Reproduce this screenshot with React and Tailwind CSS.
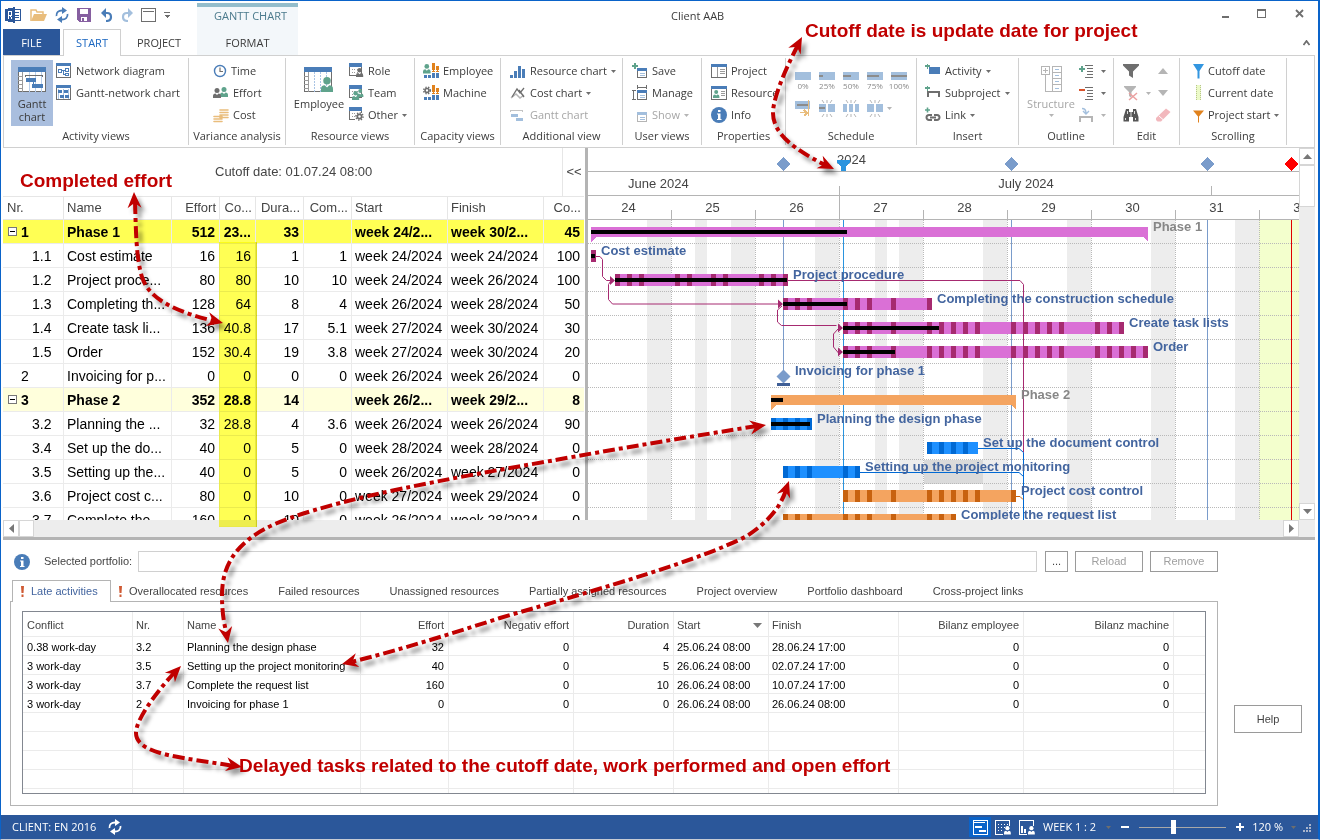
import React from 'react';

const BLUE = '#4a7db8';
const GRAY = '#6e6e6e';
const GREEN = '#5fa38c';
const ORANGE = '#e0821e';
const PALE = '#a3bfdd';

/* ---------- icons ---------- */

const Svg = ({ w = 16, h = 16, crisp = true, children }) => (
    <svg width={w} height={h} viewBox={`0 0 ${w} ${h}`} className="shrink-0" fill="none" shapeRendering={crisp ? 'crispEdges' : 'auto'} aria-hidden="true">
        {children}
    </svg>
);

const Person = ({ x, y, s = 1, c = GRAY }) => (
    <g fill={c} shapeRendering="auto">
        <circle cx={x + 4 * s} cy={y + 2.5 * s} r={2.5 * s} />
        <path d={`M${x} ${y + 10 * s} v${-2 * s} q0 ${-2.5 * s} ${2.5 * s} ${-2.5 * s} l${1.5 * s} ${1.5 * s} l${1.5 * s} ${-1.5 * s} q${2.5 * s} 0 ${2.5 * s} ${2.5 * s} v${2 * s} z`} />
    </g>
);

const Gear = ({ cx, cy, r = 3, c = GRAY }) => (
    <g shapeRendering="auto">
        <circle cx={cx} cy={cy} r={r * 0.7} stroke={c} strokeWidth="1.6" />
        <circle cx={cx} cy={cy} r={r + 0.5} stroke={c} strokeWidth="1.6" strokeDasharray="1.3 1.4" />
    </g>
);

const Frame = ({ w = 15, h = 15 }) => (
    <>
        <rect x="0.5" y="0.5" width={w - 1} height={h - 1} fill="#fff" stroke={GRAY} />
        <rect width={w} height="3" fill={BLUE} />
    </>
);

const DotGrid = ({ w = 12 }) => (
    <>
        <rect x="0.5" y="0.5" width={w} height="12" fill="#fff" stroke={GRAY} />
        <rect width={w + 1} height="4" fill={BLUE} />
        <path d="M3 6v6M5.500 6v6M8 6v6" stroke="#9a9a9a" strokeDasharray="1 2" />
    </>
);

const NetworkIcon = () => (
    <Svg>
        <Frame />
        <path d="M2.500 6.500h3v3h-3zM9.500 5.500h3v3h-3zM9.500 10.500h3v2h-3zM5.500 7.500h4M7.500 7.500v4h2" stroke={BLUE} />
    </Svg>
);

const GanttNetIcon = () => (
    <Svg>
        <Frame />
        <path d="M2.500 4v10M7.500 4v10M12.500 4v10" stroke="#a9c4e4" />
        <path d="M2 5h4v3h-4zM8 5h4v3h-4zM4 10h4v3h-4zM9 10h4v3h-4z" fill={BLUE} />
    </Svg>
);

const GanttBigIcon = () => (
    <Svg w={28} h={26}>
        <rect x="0.5" y="0.5" width="27" height="24" fill="#fff" stroke={GRAY} />
        <path d="M4.500 5v20M0 9.500h4M0 13.500h4M0 17.500h4M0 21.500h4" stroke="#9a9a9a" />
        <path d="M11.500 5v20M17.500 5v20M23.500 5v20" stroke="#b9d0ec" />
        <rect width="28" height="5" fill={BLUE} />
        <path d="M7.500 10V8.500h17V10" stroke={GRAY} />
        <path d="M8 11h10v4H8zM14 17h11v4H14z" fill={BLUE} />
        <path d="M15.500 15v2" stroke={BLUE} />
    </Svg>
);

const EmployeeBigIcon = () => (
    <Svg w={30} h={26}>
        <rect x="0.5" y="0.5" width="27" height="24" fill="#fff" stroke={GRAY} />
        <path d="M4.500 5v20M0 9.500h4M0 13.500h4M0 17.500h4M0 21.500h4" stroke="#9a9a9a" />
        <path d="M10.500 5v20M16.500 5v20M22.500 5v20" stroke="#a9c4e4" strokeDasharray="2 1" />
        <rect width="28" height="5" fill={BLUE} />
        <Person x={17} y={10} s={1.5} c={GREEN} />
    </Svg>
);

const ClockIcon = () => (
    <Svg w={14} h={14} crisp={false}>
        <circle cx="7" cy="7" r="5.500" stroke={BLUE} strokeWidth="1.400" />
        <path d="M7 3.500V7.500h3" stroke={GRAY} strokeWidth="1.200" />
    </Svg>
);

const EffortIcon = () => (
    <Svg>
        <Person x={7} y={2} s={1} c={GREEN} />
        <Person x={0} y={3} s={1} c={GRAY} />
    </Svg>
);

const CostIcon = () => (
    <Svg crisp={false}>
        <path d="M7 3h8M7 5.500h8M7 8h8M7 10.500h8M1 9.500h8M1 12h8M1 14.500h8" stroke="#e9bd7c" strokeWidth="1.600" strokeLinecap="round" />
    </Svg>
);

const RoleIcon = () => <Svg w={15}><DotGrid /><Person x={7} y={5} s={0.9} c={GRAY} /></Svg>;
const TeamIcon = () => <Svg w={15}><DotGrid /><Person x={8} y={4} s={0.8} c={GREEN} /><Person x={3} y={6} s={0.9} c={GREEN} /></Svg>;
const OtherIcon = () => <Svg w={15}><DotGrid /><rect x="6" y="6" width="8" height="8" fill="#fff" /><Gear cx={10.5} cy={9.5} r={3} /></Svg>;

const CapBars = () => (
    <>
        <path d="M9 0h3v9H9zM13 3h3v6h-3z" fill={ORANGE} />
        <path d="M9 7.500h7" stroke="#fff" strokeDasharray="1 1" />
        <path d="M1 12h3v3H1zM5 12h3v3H5zM9 10h3v5H9zM13 10h3v5h-3z" fill={BLUE} />
    </>
);
const CapEmployeeIcon = () => <Svg><CapBars /><Person x={0} y={1} s={0.95} c={GREEN} /></Svg>;
const CapMachineIcon = () => <Svg><CapBars /><Gear cx={4} cy={5.5} r={2.8} /></Svg>;

const ResChartIcon = () => (
    <Svg><path d="M0 12h3v3H0zM4 8h3v7H4zM8 3h3v12H8zM12 6h3v9h-3z" fill={BLUE} /></Svg>
);
const CostChartIcon = () => (
    <Svg crisp={false}>
        <path d="M1 13l5-4 4 4 4-3" stroke="#b5b5b5" strokeWidth="1.500" />
        <path d="M2 12l5-8 3 4 4-5M9 5l5 7" stroke={GRAY} strokeWidth="1.300" />
    </Svg>
);
const GanttSmallIcon = () => (
    <Svg>
        <path d="M0.500 5V3.500h12V5" stroke="#c4c4c4" />
        <path d="M1 7h7v3H1zM6 11h7v3H6z" fill={PALE} />
    </Svg>
);

const MiniWin = ({ pale }) => (
    <>
        <rect x="5.500" y="6.500" width="9" height="8" fill="#fff" stroke={pale ? '#b5b5b5' : GRAY} />
        <rect x="5" y="5" width="10" height="3" fill={pale ? PALE : BLUE} />
        <path d="M8 10.500h5M8 12.500h5" stroke={PALE} />
    </>
);
const SaveViewIcon = () => <Svg><MiniWin /><path d="M0 3h6M3 0v6" stroke={GREEN} strokeWidth="2" /></Svg>;
const ManageIcon = () => (
    <Svg><MiniWin /><path d="M5.500 0v4M14.500 0v4M5 2.500h10M1.500 5v10M0 5.500h4M0 14.500h4" stroke={GRAY} /></Svg>
);
const ShowIcon = () => <Svg><MiniWin pale /></Svg>;

const ProjectIcon = () => (
    <Svg>
        <rect x="0.500" y="1.500" width="15" height="13" fill="#fff" stroke={GRAY} />
        <rect y="1" width="16" height="3" fill={BLUE} />
        <path d="M6.500 4v10M9 6.500h5M9 8.500h5M9 10.500h5" stroke="#9a9a9a" />
    </Svg>
);
const ResourceIcon = () => (
    <Svg>
        <rect x="0.500" y="1.500" width="15" height="13" fill="#fff" stroke={GRAY} />
        <rect y="1" width="16" height="3" fill={BLUE} />
        <Person x={2} y={5} s={0.8} c={GREEN} />
        <path d="M10 6.500h4M10 8.500h4M10 10.500h4" stroke="#9a9a9a" />
    </Svg>
);
const InfoIcon = () => (
    <Svg crisp={false}>
        <circle cx="8" cy="8" r="8" fill={BLUE} />
        <path d="M7 3h2.500v2H7zM6 6.500h3.500v5.500h1v1H6v-1h1V7.500H6z" fill="#fff" />
    </Svg>
);

const Percent = ({ p }) => (
    <Svg w={16} h={9}>
        <rect width="16" height="8" fill={PALE} />
        {p > 0 && <rect y="3" width={(16 * p) / 100} height="2" fill="#8c8c8c" />}
    </Svg>
);
const MoveIcon = () => (
    <Svg w={16} h={17}>
        <rect y="1" width="15" height="8" fill={PALE} />
        <path d="M2 5h11" stroke="#8c8c8c" strokeWidth="2" />
        <path d="M13.500 0v16" stroke="#e9bd7c" />
        <path d="M5 12.500h7M9 10l3 3-3 3" stroke="#e9bd7c" strokeWidth="1.500" />
    </Svg>
);
const Burst = ({ kind }) => (
    <Svg w={16} h={17} crisp={false}>
        <path d="M8 0v3M3 0l2 3M13 0l-2 3M8 14v3M3 17l2-3M13 17l-2-3" stroke="#b5b5b5" />
        <path d={kind === 2 ? 'M0 4h4v8H0zM6 4h4v8H6zM12 4h4v8h-4z' : 'M0 4h7v8H0zM9 4h7v8H9z'} fill={PALE} />
        {kind === 1 && <path d="M0 8h6" stroke="#8c8c8c" strokeWidth="2" />}
    </Svg>
);

const Plus = () => <path d="M0 3h5M2.500 0.500v5" stroke={GREEN} strokeWidth="1.600" />;
const ActivityIcon = () => <Svg><path d="M4 4h11v7H4z" fill={BLUE} /><Plus /></Svg>;
const SubprojectIcon = () => <Svg><path d="M3 12V6.500h11V12" stroke={GRAY} strokeWidth="2" /><Plus /></Svg>;
const LinkIcon = () => (
    <Svg crisp={false}>
        <path d="M7 8H4a2.500 2.500 0 0 0 0 5h3M9 8h3a2.500 2.500 0 0 1 0 5H9M5 10.500h6" stroke={GRAY} strokeWidth="2" />
        <Plus />
    </Svg>
);

const StructureIcon = () => (
    <Svg w={21} h={28}>
        <path d="M0.500 1.500h8v8h-8zM4.500 3v5M2 5.500h5M4.500 10v16.500h6M11.500 1.500h9v25h-9zM11 7.500h9M11 13.500h9M11 19.500h9" stroke="#b5b5b5" />
        <path d="M14 4.500h4M14 10.500h4M14 16.500h4M14 23.500h4" stroke={PALE} />
    </Svg>
);
const OutlineIcon = ({ minus }) => (
    <Svg w={15}>
        <path d="M6 2.500h8M8 5.500h6M8 8.500h6M8 11.500h6M6 14.500h8" stroke={GRAY} />
        {minus ? <path d="M0 5h6" stroke="#d9532c" strokeWidth="2" /> : <path d="M0 6h6M3 3v6" stroke={GREEN} strokeWidth="2" />}
    </Svg>
);
const OutlineSubIcon = () => (
    <Svg w={15}>
        <path d="M1 15V9.500h12V15" stroke="#b5b5b5" strokeWidth="2" />
        <path d="M3 1.500q4 0 4 4.500M4 4l3 3 3-3" stroke={PALE} strokeWidth="1.400" shapeRendering="auto" />
    </Svg>
);

const FilterIcon = () => <Svg crisp={false}><path d="M0 1h16v1.500l-6 6V15l-4-2.500v-4l-6-6z" fill={GRAY} /></Svg>;
const FilterOffIcon = () => (
    <Svg crisp={false}>
        <path d="M1 1h12v1L8.500 7v6L6 11V7L1 2z" fill="#b5b5b5" />
        <path d="M6 8l8 7M14 8l-8 7" stroke="#eba0a0" strokeWidth="1.500" />
    </Svg>
);
const BinocularsIcon = () => (
    <Svg crisp={false}>
        <path d="M3 2h3v3h4V2h3l2.500 8v4.500H10V10H6v4.500H0.500V10z" fill="#555" />
        <path d="M8 4v6M2.500 11v2M12.500 11v2M4.500 4v3M11.500 4v3" stroke="#fff" strokeWidth="0.800" />
    </Svg>
);
const EraserIcon = () => (
    <Svg crisp={false}>
        <path d="M1 11L11 1.500l4.500 3.500L6 14.500H2.500L1 13z" fill="#f2b8bd" />
        <path d="M4 9l4.500 4" stroke="#fff" />
    </Svg>
);
const Tri = ({ up }) => <Svg w={12} h={10} crisp={false}><path d={up ? 'M1 8l5-6 5 6z' : 'M1 2l5 6 5-6z'} fill="#b5b5b5" /></Svg>;

const CutoffIcon = () => <Svg w={11} crisp={false}><path d="M0 1h11L6.500 8v7.500h-2V8z" fill="#3396e0" /></Svg>;
const CurrentIcon = () => (
    <Svg w={11}>
        <rect x="3" width="5" height="15" fill="#ecfac8" />
        <path d="M3.500 0v15M7.500 0v15" stroke="#b7c58c" strokeDasharray="1 1" />
    </Svg>
);
const StartIcon = () => <Svg w={11} crisp={false}><path d="M0 3.500h11L6 9.500V15.500H5V9.500z" fill={ORANGE} /></Svg>;

const SyncIcon = ({ c = BLUE }) => (
    <Svg w={14} h={16} crisp={false}>
        <path d="M1.500 9C1 5.500 3.500 3.500 7 3.500M12.500 7c0.500 3.500-2 5.500-5.500 5.500" stroke={c} strokeWidth="1.800" />
        <path d="M7 0l5 3.500L7 7zM7 9l-5 3.500L7 16z" fill={c} />
    </Svg>
);

const Caret = ({ pale }) => (
    <svg width="5" height="3" viewBox="0 0 5 3" className="shrink-0" aria-hidden="true">
        <path d="M0 0h5L2.500 3z" fill={pale ? '#b5b5b5' : '#6e6e6e'} />
    </svg>
);

/* ---------- ribbon ---------- */

const SmallButton = ({ icon, label, caret, off }) => (
    <button type="button" disabled={off} className={`flex items-center h-[22px] gap-1 whitespace-nowrap ${off ? 'text-[#a6a6a6]' : ''}`}>
        {icon}
        <span>{label}</span>
        {caret && <Caret pale={off} />}
    </button>
);

const Group = ({ label, className, children }) => (
    <>
        <section aria-label={label} className={`shrink-0 pt-1 ${className}`}>
            <div className="flex h-[66px]">{children}</div>
            <div className="h-5 leading-5 text-center whitespace-nowrap">{label}</div>
        </section>
        <div className="w-px my-0.5 shrink-0 bg-[#d0d0d0]" />
    </>
);

const Ribbon = () => (
    <div className="flex ml-0.5 mr-[3px] border border-t-0 border-[#d0d0d0] h-[92px] overflow-hidden">
        <Group label="Activity views" className="w-[184px]">
            <button type="button" className="ml-[7px] mr-[3px] w-[42px] bg-[#a9bede] flex flex-col items-center pt-[7px] leading-[13px]">
                <GanttBigIcon />
                <span className="pt-1">Gantt chart</span>
            </button>
            <div>
                <SmallButton icon={<NetworkIcon />} label="Network diagram" />
                <SmallButton icon={<GanttNetIcon />} label="Gantt-network chart" />
            </div>
        </Group>
        <Group label="Variance analysis" className="w-24">
            <div className="pl-6">
                <SmallButton icon={<ClockIcon />} label="Time" />
                <SmallButton icon={<EffortIcon />} label="Effort" />
                <SmallButton icon={<CostIcon />} label="Cost" />
            </div>
        </Group>
        <Group label="Resource views" className="w-32">
            <button type="button" className="ml-[7px] w-[52px] flex flex-col items-center pt-[7px] leading-[13px]">
                <EmployeeBigIcon />
                <span className="pt-1">Employee</span>
            </button>
            <div className="pl-1">
                <SmallButton icon={<RoleIcon />} label="Role" />
                <SmallButton icon={<TeamIcon />} label="Team" />
                <SmallButton icon={<OtherIcon />} label="Other" caret />
            </div>
        </Group>
        <Group label="Capacity views" className="w-[85px]">
            <div className="pl-2">
                <SmallButton icon={<CapEmployeeIcon />} label="Employee" />
                <SmallButton icon={<CapMachineIcon />} label="Machine" />
            </div>
        </Group>
        <Group label="Additional view" className="w-[121px]">
            <div className="pl-[9px]">
                <SmallButton icon={<ResChartIcon />} label="Resource chart" caret />
                <SmallButton icon={<CostChartIcon />} label="Cost chart" caret />
                <SmallButton icon={<GanttSmallIcon />} label="Gantt chart" off />
            </div>
        </Group>
        <Group label="User views" className="w-[78px]">
            <div className="pl-[9px]">
                <SmallButton icon={<SaveViewIcon />} label="Save" />
                <SmallButton icon={<ManageIcon />} label="Manage" />
                <SmallButton icon={<ShowIcon />} label="Show" caret off />
            </div>
        </Group>
        <Group label="Properties" className="w-[83px]">
            <div className="pl-[9px]">
                <SmallButton icon={<ProjectIcon />} label="Project" />
                <SmallButton icon={<ResourceIcon />} label="Resource" />
                <SmallButton icon={<InfoIcon />} label="Info" />
            </div>
        </Group>
        <Group label="Schedule" className="w-[130px]">
            <div className="pl-[9px] pt-3 flex flex-col gap-2.5">
                <div className="flex gap-2">
                    {[0, 25, 50, 75, 100].map((p) => (
                        <button key={p} type="button" className="w-4 flex flex-col items-center text-[8px] leading-[9px] text-[#8a8a8a]">
                            <Percent p={p} />
                            <span>{p}%</span>
                        </button>
                    ))}
                </div>
                <div className="flex gap-2 items-center">
                    <button type="button" aria-label="Move"><MoveIcon /></button>
                    <button type="button" aria-label="Split"><Burst kind={1} /></button>
                    <button type="button" aria-label="Split all"><Burst kind={2} /></button>
                    <button type="button" aria-label="Merge" className="flex items-center gap-1"><Burst kind={3} /><Caret pale /></button>
                </div>
            </div>
        </Group>
        <Group label="Insert" className="w-[101px]">
            <div className="pl-2">
                <SmallButton icon={<ActivityIcon />} label="Activity" caret />
                <SmallButton icon={<SubprojectIcon />} label="Subproject" caret />
                <SmallButton icon={<LinkIcon />} label="Link" caret />
            </div>
        </Group>
        <Group label="Outline" className="w-[94px]">
            <button type="button" disabled className="ml-1 w-[56px] flex flex-col items-center pt-[5px] leading-[13px] text-[#a6a6a6]">
                <StructureIcon />
                <span className="pt-1 pb-1">Structure</span>
                <Caret pale />
            </button>
            <div>
                {[<OutlineIcon />, <OutlineIcon minus />, <OutlineSubIcon />].map((icon, i) => (
                    <button key={i} type="button" aria-label="Outline level" className="flex items-center gap-[7px] h-[22px]">
                        {icon}<Caret pale={i === 2} />
                    </button>
                ))}
            </div>
        </Group>
        <Group label="Edit" className="w-[65px]">
            <div className="pl-[9px] flex flex-col">
                <button type="button" aria-label="Filter" className="h-[22px] flex items-center"><FilterIcon /></button>
                <button type="button" aria-label="Clear filter" className="h-[22px] flex items-center gap-[7px]"><FilterOffIcon /><Caret pale /></button>
                <button type="button" aria-label="Find" className="h-[22px] flex items-center"><BinocularsIcon /></button>
            </div>
            <div className="pl-1 flex flex-col items-center">
                <button type="button" aria-label="Previous" className="h-[22px] flex items-center"><Tri up /></button>
                <button type="button" aria-label="Next" className="h-[22px] flex items-center"><Tri /></button>
                <button type="button" aria-label="Erase" className="h-[22px] flex items-center"><EraserIcon /></button>
            </div>
        </Group>
        <Group label="Scrolling" className="w-[106px]">
            <div className="pl-[13px] flex flex-col">
                <SmallButton icon={<CutoffIcon />} label="Cutoff date" />
                <SmallButton icon={<CurrentIcon />} label="Current date" />
                <SmallButton icon={<StartIcon />} label="Project start" caret />
            </div>
        </Group>
    </div>
);

/* ---------- title bar and tabs ---------- */

const TitleBar = () => (
    <header className="flex items-stretch h-[55px] pl-0.5 text-[#3b3b3b]">
        <div className="flex flex-col w-[194px]">
            <div className="flex items-center h-[29px] gap-2 pl-0.5">
                <Svg w={17} h={16}>
                    <rect x="7.500" y="2.500" width="8" height="11" fill="#fff" stroke="#2b579a" />
                    <path d="M10 5.500h4M10 8h4M10 10.500h4" stroke="#2b579a" />
                    <path d="M0 2l10-2v16l-10-2z" fill="#2b579a" />
                    <path d="M3.500 11.500v-7h2.500v3.500h-2M5 8l2 3.500" stroke="#fff" />
                </Svg>
                <Svg w={17} h={16} crisp={false}>
                    <path d="M1 14V3h5l1 2h6v2" stroke="#e9bd7c" strokeWidth="1.500" />
                    <path d="M1 14L4 7h13l-3 7z" fill="#e9bd7c" />
                </Svg>
                <SyncIcon />
                <Svg w={14} h={14}>
                    <path d="M0 0h14v14H2L0 12z" fill="#865fa0" />
                    <path d="M3 1h8v5H3zM4 9h6v4H4z" fill="#fff" />
                    <rect x="5" y="10" width="2" height="3" fill="#865fa0" />
                </Svg>
                <span className="pl-0.5">
                    <Svg w={12} h={14} crisp={false}>
                        <path d="M2 5h4q4 0 4 4t-5 4" stroke={BLUE} strokeWidth="2.200" />
                        <path d="M0 5l5-5v10z" fill={BLUE} />
                    </Svg>
                </span>
                <Svg w={12} h={14} crisp={false}>
                    <path d="M10 5H6q-4 0-4 4t5 4" stroke={PALE} strokeWidth="2.200" />
                    <path d="M12 5L7 0v10z" fill={PALE} />
                </Svg>
                <Svg w={15} h={14}>
                    <path d="M0.500 0.500h14v13h-14zM2 3.500h11" stroke={GRAY} />
                </Svg>
                <Svg w={6} h={8}>
                    <path d="M0 1.500h6" stroke={GRAY} />
                    <path d="M0 4h6l-3 3z" fill={GRAY} />
                </Svg>
            </div>
            <nav className="flex flex-1 text-center leading-6">
                <button type="button" className="w-[57px] bg-[#2b579a] text-white">FILE</button>
                <button type="button" className="ml-[3px] w-[58px] h-[27px] border border-b-0 border-[#d0d0d0] text-[#1a66c0]">START</button>
                <button type="button" className="flex-1">PROJECT</button>
            </nav>
        </div>
        <div className="mt-0.5 w-[101px] bg-[#f3f7fa] border-t-4 border-[#93bdcb] text-center flex flex-col">
            <div className="h-[23px] pl-1.5 leading-[18px] text-[#4b7a8c]">GANTT CHART</div>
            <button type="button" className="flex-1 leading-6">FORMAT</button>
        </div>
        <div className="flex-1 pt-[5px] pl-[373px] leading-5">Client AAB</div>
        <div className="flex flex-col items-end justify-between pr-2 pb-2.5">
            <div className="flex gap-7 pt-2 pr-1.5 items-center">
                <button type="button" aria-label="Minimize"><Svg w={7} h={10}><path d="M0 8h7" stroke={GRAY} strokeWidth="2" /></Svg></button>
                <button type="button" aria-label="Maximize"><Svg w={10} h={10}><path d="M0.500 0.500h8v8h-8zM0 1.500h9" stroke={GRAY} /></Svg></button>
                <button type="button" aria-label="Close"><Svg w={9} h={10} crisp={false}><path d="M1 1l7 7M8 1l-7 7" stroke={GRAY} strokeWidth="1.800" /></Svg></button>
            </div>
            <button type="button" aria-label="Collapse ribbon"><Svg w={7} h={6} crisp={false}><path d="M0.500 5l3-4 3 4" stroke={GRAY} strokeWidth="1.800" /></Svg></button>
        </div>
    </header>
);

/* ---------- activity grid ---------- */

const rows = [
    ['1', 'Phase 1', '512', '23...', '33', '', 'week 24/2...', 'week 30/2...', '45'],
    ['1.1', 'Cost estimate', '16', '16', '1', '1', 'week 24/2024', 'week 24/2024', '100'],
    ['1.2', 'Project proce...', '80', '80', '10', '10', 'week 24/2024', 'week 26/2024', '100'],
    ['1.3', 'Completing th...', '128', '64', '8', '4', 'week 26/2024', 'week 28/2024', '50'],
    ['1.4', 'Create task li...', '136', '40.8', '17', '5.1', 'week 27/2024', 'week 30/2024', '30'],
    ['1.5', 'Order', '152', '30.4', '19', '3.8', 'week 27/2024', 'week 30/2024', '20'],
    ['2', 'Invoicing for p...', '0', '0', '0', '0', 'week 26/2024', 'week 26/2024', '0'],
    ['3', 'Phase 2', '352', '28.8', '14', '', 'week 26/2...', 'week 29/2...', '8'],
    ['3.2', 'Planning the ...', '32', '28.8', '4', '3.6', 'week 26/2024', 'week 26/2024', '90'],
    ['3.4', 'Set up the do...', '40', '0', '5', '0', 'week 28/2024', 'week 28/2024', '0'],
    ['3.5', 'Setting up the...', '40', '0', '5', '0', 'week 26/2024', 'week 27/2024', '0'],
    ['3.6', 'Project cost c...', '80', '0', '10', '0', 'week 27/2024', 'week 29/2024', '0'],
    ['3.7', 'Complete the...', '160', '0', '10', '0', 'week 26/2024', 'week 28/2024', '0'],
];

const gridHead = ['Nr.', 'Name', 'Effort', 'Co...', 'Dura...', 'Com...', 'Start', 'Finish', 'Co...'];
const isLeft = (i) => i < 2 || i === 6 || i === 7;

const ActivityGrid = () => (
    <div className="w-[582px] shrink-0">
        <div className="flex h-12 text-[13px] text-[#444]">
            <div className="flex-1 pl-[212px] leading-[48px]">Cutoff date: 01.07.24 08:00</div>
            <button type="button" className="w-[23px] border-l border-[#e6e6e6]">&lt;&lt;</button>
        </div>
        <div className="h-[324px] overflow-hidden">
            <table className="table-fixed w-[581px] border-separate border-spacing-0 text-sm leading-[22px] text-black">
                <colgroup>
                    <col className="w-[61px]" />
                    <col className="w-[108px]" />
                    <col className="w-12" />
                    <col className="w-9" />
                    <col className="w-12" />
                    <col className="w-12" />
                    <col className="w-24" />
                    <col className="w-24" />
                    <col className="w-10" />
                </colgroup>
                <thead>
                    <tr className="text-[13px] text-[#444]">
                        {gridHead.map((h, i) => (
                            <th key={i} className={`h-6 px-[3px] first:pl-1 font-normal border-t border-b border-r last:border-r-0 border-[#e6e6e6] whitespace-nowrap ${isLeft(i) ? 'text-left' : 'text-right'}`}>{h}</th>
                        ))}
                    </tr>
                </thead>
                <tbody>
                    {rows.map((r) => {
                        const phase = r[1].startsWith('Phase');
                        const bg = r[0] === '1' ? 'bg-[#ffff54] font-bold' : phase ? 'bg-[#ffffdc] font-bold' : '';
                        return (
                            <tr key={r[0]} className={bg}>
                                {r.map((v, i) => (
                                    <td key={i} className={`h-6 pl-[3px] pr-1 border-b border-r last:border-r-0 border-[#ebebeb] whitespace-nowrap ${isLeft(i) ? 'text-left' : 'text-right'}`}>
                                        {i === 0 ? (
                                            <span className={`flex items-center ${phase ? 'pl-0.5 gap-1' : r[0].length > 1 ? 'pl-[26px]' : 'pl-[15px]'}`}>
                                                {phase && <Svg w={9} h={9}><path d="M0.500 0.500h8v8h-8z" fill="#fff" stroke="#777" /><path d="M2 4.500h5" stroke="#000" /></Svg>}
                                                {v}
                                            </span>
                                        ) : v}
                                    </td>
                                ))}
                            </tr>
                        );
                    })}
                </tbody>
            </table>
        </div>
    </div>
);

/* ---------- gantt ---------- */

// one day is 12px wide, day 0 is Monday of week 24
const dayX = (d) => 12 * d - 1;
const HOLIDAYS = [9, 24];
const isFree = (d) => d % 7 > 4 || HOLIDAYS.includes(d);

const PINK = ['#da70d6', '#a62a70'];
const AMBER = ['#f4a460', '#c8620f'];
const AZURE = ['#1e90ff', '#0069d4'];

const tasks = [
    { row: 1, from: 0, to: 0, c: PINK, done: 4, label: 'Cost estimate' },
    { row: 2, from: 2, to: 16, c: PINK, done: 172, label: 'Project procedure' },
    { row: 3, from: 16, to: 28, c: PINK, done: 64, label: 'Completing the construction schedule' },
    { row: 4, from: 21, to: 44, c: PINK, done: 96, label: 'Create task lists' },
    { row: 5, from: 21, to: 46, c: PINK, done: 52, label: 'Order' },
    { row: 8, from: 15, to: 18, c: AZURE, done: 39, label: 'Planning the design phase' },
    { row: 9, from: 28, to: 31, tail: 10, c: AZURE, label: 'Set up the document control' },
    { row: 10, from: 16, to: 22, c: AZURE, label: 'Setting up the project monitoring' },
    { row: 11, from: 21, to: 35, c: AMBER, label: 'Project cost control' },
    { row: 12, from: 16, to: 30, c: AMBER, label: 'Complete the request list' },
];

const Task = ({ row, from, to, tail = 0, c, done }) => {
    const x = dayX(from) + 4;
    const y = row * 24 + 6;
    const days = [];
    for (let d = from; d <= to; d++) if (!isFree(d)) days.push(d);
    return (
        <g>
            <rect x={x} y={y} width={dayX(to) + 9 + tail - x} height="12" fill={c[0]} />
            {days.map((d) => <rect key={d} x={dayX(d) + 4} y={y} width="5" height="12" fill={c[1]} />)}
            {done && <rect x={x} y={y + 4} width={done} height="4" fill="#000" />}
        </g>
    );
};

const Summary = ({ row, x1, x2, done, c }) => {
    const y = row * 24 + 7;
    return (
        <g>
            <path d={`M${x1} ${y}H${x2}v15l-5-5H${x1 + 5}l-5 5z`} fill={c} />
            <rect x={x1} y={y + 3} width={done} height="4" fill="#000" />
        </g>
    );
};

const Gantt = () => (
    <div className="flex-1 min-w-0 overflow-hidden relative text-[13px] leading-6 text-[#444]">
        <div className="h-6 border-b border-[#b4b4b4] pl-[249px]">2024</div>
        <div className="h-6 border-b border-[#b4b4b4] flex">
            <div className="w-[252px] pl-10 shrink-0">June 2024</div>
            <div className="w-[372px] text-center shrink-0">July 2024</div>
        </div>
        <div className="h-6 border-b border-[#b4b4b4] flex overflow-hidden">
            {[24, 25, 26, 27, 28, 29, 30, 31, 32].map((w) => (
                <div key={w} className="w-[84px] shrink-0 pr-[3px] text-center">{w}</div>
            ))}
        </div>
        {/* header ticks and date markers */}
        <svg className="absolute left-0 top-0 w-full h-[72px]" shapeRendering="crispEdges" aria-hidden="true">
            <path d="M251.500 38v34M623.500 38v10M83.500 62v10M167.500 62v10M335.500 62v10M419.500 62v10M503.500 62v10M587.500 62v10M671.500 62v10" stroke="#b4b4b4" />
            {[195, 423, 619].map((x) => <path key={x} d={`M${x + 0.5} 10l6 6-6 6-6-6z`} fill="#7a9ccb" stroke="#7a9ccb" />)}
            <path d="M703.500 10l6 6-6 6-6-6z" fill="#f00" stroke="#f00" />
            <path d="M249 12h13v2l-4 5v4h-5v-4l-4-5z" fill="#2a94df" />
        </svg>
        <svg className="block w-full h-[300px]" aria-hidden="true" fontFamily='"Liberation Sans", Arial, sans-serif' fontWeight="bold" fontSize="13">
            <g shapeRendering="crispEdges" fill="none">
                {Array.from({ length: 56 }, (_, d) => d).filter(isFree).map((d) => (
                    <rect key={d} x={dayX(d)} y="0" width="12" height="300" fill="#ededed" />
                ))}
                <rect x="671" y="0" width="200" height="300" fill="#f3ffcd" />
                <rect x="336" y="240" width="59" height="24" fill="#dadada" />
                {Array.from({ length: 12 }, (_, i) => (
                    <path key={i} d={`M0 ${i * 24 + 23.5}h1200`} stroke="#b9b9b9" strokeDasharray="1 1" />
                ))}
                {Array.from({ length: 8 }, (_, i) => (
                    <path key={i} d={`M${i * 84 + 83.5} 0v300`} stroke="#b9b9b9" strokeDasharray="1 1" />
                ))}
                <path d="M423.500 0v300M619.500 0v300M195.500 0v150" stroke="#7a9ccb" />
                <path d="M255.500 0v300" stroke="#2a94df" />
                <path d="M703.500 0v300" stroke="#e00000" />

                <Summary row={0} x1={3} x2={560} done={256} c={PINK[0]} />
                <Summary row={7} x1={183} x2={428} done={12} c={AMBER[0]} />
                {tasks.map((t) => <Task key={t.label} {...t} />)}
            </g>
            <g fill="none" strokeWidth="1">
                <path d="M8 36.500h4l2.500 3v17l4 4h5M25 60.500h-2l-2.500 4v15l4 4.500h166M194 86l-4.500 4v12l4 3.500h55M250 109l-4.500 5v13l5 6M200 60.500h232l3.500 4v168" stroke={PINK[1]} />
                <path d="M22 56l5 4.500-5 4.500zM190 79.500l5 4.500-5 4.500zM250 103.500l5 4.500-5 4.500zM250 127.500l5 4.500-5 4.500z" fill={PINK[1]} />
                <path d="M390 228.500h41l4.500 4V300M272 252.500h159l4.500 4" stroke={AZURE[1]} />
                <path d="M428 276.500h4l3 3" stroke={AMBER[1]} />
            </g>
            <path d="M195.500 149.500l7 7-7 7-7-7z" fill="#7a9ccb" />
            <path d="M189 164.500h13" stroke="#3f5f96" strokeWidth="3" />
            <g fill="#43659f">
                {tasks.map((t) => (
                    <text key={t.label} x={dayX(t.to) + 14 + (t.tail || 0)} y={t.row * 24 + 11}>{t.label}</text>
                ))}
                <text x="207" y="155">Invoicing for phase 1</text>
            </g>
            <g fill="#878787">
                <text x="565" y="11">Phase 1</text>
                <text x="433" y="179">Phase 2</text>
            </g>
        </svg>
    </div>
);

const ScrollButton = ({ d, label }) => (
    <button type="button" aria-label={label} className="w-4 h-[17px] shrink-0 bg-white border border-[#d6d6d6] flex items-center justify-center">
        <svg width="9" height="9" viewBox="0 0 9 9" aria-hidden="true"><path d={d} fill="#777" /></svg>
    </button>
);

/* ---------- late activities ---------- */

const late = [
    ['0.38 work-day', '3.2', 'Planning the design phase', '32', '0', '4', '25.06.24 08:00', '28.06.24 17:00', '0', '0'],
    ['3 work-day', '3.5', 'Setting up the project monitoring', '40', '0', '5', '26.06.24 08:00', '02.07.24 17:00', '0', '0'],
    ['3 work-day', '3.7', 'Complete the request list', '160', '0', '10', '26.06.24 08:00', '10.07.24 17:00', '0', '0'],
    ['3 work-day', '2', 'Invoicing for phase 1', '0', '0', '0', '26.06.24 08:00', '26.06.24 08:00', '0', '0'],
];
const lateHead = ['Conflict', 'Nr.', 'Name', 'Effort', 'Negativ effort', 'Duration', 'Start', 'Finish', 'Bilanz employee', 'Bilanz machine', ''];
const lateRight = [3, 4, 5, 8, 9];
const blank = Array(11).fill('');

const LateTable = () => (
    <table className="table-fixed w-full border-separate border-spacing-0 leading-4 text-black">
        <colgroup>
            <col className="w-[110px]" />
            <col className="w-[51px]" />
            <col className="w-[177px]" />
            <col className="w-[88px]" />
            <col className="w-[125px]" />
            <col className="w-[100px]" />
            <col className="w-[95px]" />
            <col className="w-[130px]" />
            <col className="w-[125px]" />
            <col className="w-[150px]" />
            <col />
        </colgroup>
        <thead>
            <tr className="text-[#444]">
                {lateHead.map((h, i) => (
                    <th key={i} className={`h-[25px] pt-0.5 pl-[3px] pr-1 first:pl-1 font-normal border-b border-r last:border-r-0 border-[#ebebeb] whitespace-nowrap ${lateRight.includes(i) ? 'text-right' : 'text-left'}`}>
                        {h === 'Start' ? (
                            <span className="flex items-center justify-between pr-0.5">
                                {h}
                                <svg width="9" height="5" viewBox="0 0 9 5" aria-hidden="true"><path d="M0 0h9L4.500 5z" fill="#777" /></svg>
                            </span>
                        ) : h}
                    </th>
                ))}
            </tr>
        </thead>
        <tbody>
            {[...late.map((r) => [...r, '']), blank, blank, blank, blank].map((r, k) => (
                <tr key={k}>
                    {r.map((v, i) => (
                        <td key={i} className={`h-[19px] pt-0.5 pl-[3px] pr-1 first:pl-1 border-b border-r last:border-r-0 border-[#ebebeb] whitespace-nowrap ${lateRight.includes(i) ? 'text-right' : 'text-left'}`}>{v}</td>
                    ))}
                </tr>
            ))}
            <tr>
                {blank.map((v, i) => <td key={i} className="h-1 border-r last:border-r-0 border-[#ebebeb]" />)}
            </tr>
        </tbody>
    </table>
);

const otherTabs = ['Failed resources', 'Unassigned resources', 'Partially assigned resources', 'Project overview', 'Portfolio dashboard', 'Cross-project links'];

const Mark = () => (
    <svg width="3" height="11" viewBox="0 0 3 11" aria-hidden="true"><path d="M0 0h3L2.500 7h-2zM0.500 8.500h2V11h-2z" fill="#cf5a33" /></svg>
);

const Portfolio = () => (
    <div className="flex flex-1 text-[11px] text-[#444]">
        <div className="flex-1 min-w-0 pl-[9px] pt-[11px]">
            <div className="flex items-center h-[21px] pl-1">
                <InfoIcon />
                <label htmlFor="portfolio" className="ml-3.5 w-[94px]">Selected portfolio:</label>
                <input id="portfolio" type="text" className="flex-1 min-w-0 h-[21px] px-1 border border-[#d0d0d0] outline-none" />
                <button type="button" className="ml-2 w-[23px] h-[21px] border border-[#9a9a9a]">...</button>
                <button type="button" disabled className="ml-[7px] w-[68px] h-[21px] border border-[#9a9a9a] text-[#a0a0a0]">Reload</button>
                <button type="button" disabled className="ml-[7px] w-[68px] h-[21px] border border-[#9a9a9a] text-[#a0a0a0]">Remove</button>
            </div>
            <div role="tablist" className="mt-2 ml-0.5 flex h-[22px] whitespace-nowrap">
                <button type="button" role="tab" aria-selected="true" className="relative z-10 w-[99px] h-[22px] pl-2 flex items-center gap-[7px] bg-white border border-b-0 border-[#b4b4b4] text-[#43659f]">
                    <Mark />Late activities
                </button>
                <button type="button" role="tab" className="pl-2 pr-[15px] flex items-center gap-[7px]"><Mark />Overallocated resources</button>
                {otherTabs.map((t) => (
                    <button key={t} type="button" role="tab" className="px-[15px]">{t}</button>
                ))}
            </div>
            <div className="-mt-px mb-2 border border-[#b4b4b4] px-[11px] pt-[9px] pb-[11px]">
                <div className="border border-[#828790]"><LateTable /></div>
            </div>
        </div>
        <div className="w-[100px] shrink-0 pl-4 pt-[165px]">
            <button type="button" className="w-[68px] h-7 border border-[#9a9a9a]">Help</button>
        </div>
    </div>
);

/* ---------- status bar ---------- */

const StatusBar = () => (
    <footer className="h-6 bg-[#2b579a] text-white flex items-center pl-[11px] pr-[7px] whitespace-nowrap">
        <span>CLIENT: EN 2016</span>
        <span className="pl-3"><SyncIcon c="#fff" /></span>
        <div className="flex-1" />
        <button type="button" aria-label="Gantt view" className="w-[22px] h-5 bg-[#0a63c9] flex items-center justify-center">
            <Svg w={15} h={15}><path d="M0.500 0.500h14v14h-14zM0 2.500h12" stroke="#fff" /><path d="M2 6h7v2H2zM6 10h7v2H6z" fill="#fff" /></Svg>
        </button>
        <button type="button" aria-label="Resource view" className="ml-1">
            <Svg w={16} h={15}>
                <path d="M0.500 14.500V0.500h14V6M0 14.500h8" stroke="#fff" />
                <path d="M3 4.500h10M3 7.500h7M3 10.500h6" stroke="#fff" strokeDasharray="1 2" />
                <Person x={9} y={6} s={0.85} c="#fff" />
            </Svg>
        </button>
        <button type="button" aria-label="Capacity view" className="ml-2">
            <Svg w={16} h={15}>
                <path d="M0.500 14.500V0.500h14V6M0 14.500h8" stroke="#fff" />
                <path d="M2 6h2v7H2zM5 9h2v4H5z" fill="#fff" />
                <Person x={9} y={6} s={0.85} c="#fff" />
            </Svg>
        </button>
        <button type="button" className="ml-2 flex items-center gap-2.5">WEEK 1 : 2 <Caret /></button>
        <button type="button" aria-label="Zoom out" className="ml-2.5"><Svg w={8} h={8}><path d="M0 4h8" stroke="#fff" strokeWidth="2" /></Svg></button>
        <input
            type="range"
            aria-label="Zoom"
            min="0"
            max="100"
            defaultValue="39"
            className="ml-2.5 w-[87px] h-4 appearance-none bg-[linear-gradient(#a8a8a8,#a8a8a8)] bg-[length:100%_1px] bg-center bg-no-repeat [&::-webkit-slider-thumb]:appearance-none [&::-webkit-slider-thumb]:w-[5px] [&::-webkit-slider-thumb]:h-3.5 [&::-webkit-slider-thumb]:bg-white [&::-webkit-slider-thumb]:rounded-none"
        />
        <button type="button" aria-label="Zoom in" className="ml-2.5"><Svg w={8} h={8}><path d="M0 4h8M4 0v8" stroke="#fff" strokeWidth="2" /></Svg></button>
        <button type="button" className="ml-2 mr-1.5 flex items-center gap-2">120 % <Caret /></button>
        <Svg w={9} h={9}><path d="M7 1.500h2M4 4.500h2M7 4.500h2M1 7.500h2M4 7.500h2M7 7.500h2" stroke="#a8b4cc" strokeWidth="2" /></Svg>
    </footer>
);

/* ---------- callouts ---------- */

const arrows = [
    { d: 'M798 45C789 62 773 96 773 113C773 134 795 150 827 166', heads: [[802, 37, -62], [834, 169, 26]] },
    { d: 'M135 202C136 230 136 258 142 277C150 302 182 313 214 321', heads: [[134, 192, -92], [223, 323, 14]] },
    { d: 'M757 426C700 435 610 450 550 461C440 480 350 497 290 518C248 533 222 555 222 595C222 612 224 625 227 634', heads: [[766, 425, -9], [228, 643, 80]] },
    { d: 'M786 490C780 508 768 522 747 536C700 560 610 586 500 618C450 634 400 650 351 662', heads: [[789, 481, -70], [342, 664, 166]] },
    { d: 'M175 672C160 688 136 718 136 733C136 756 190 758 233 766', heads: [[181, 666, -46], [242, 767, 10]] },
];

const Callouts = () => (
    <div className="absolute inset-0 pointer-events-none overflow-hidden font-bold text-[19px] leading-6 text-[#c00000] whitespace-nowrap">
        <div className="absolute left-[218px] top-[241px] w-[38px] h-[285px] bg-[#ffff54] mix-blend-multiply shadow-[inset_-1px_0_1px_#d8d820]" />
        <svg className="absolute -left-px -top-px w-full h-full drop-shadow-[4px_5px_2px_rgba(0,0,0,0.4)]" fill="none" aria-hidden="true">
            {arrows.map((a) => (
                <g key={a.d}>
                    <path d={a.d} stroke="#c00000" strokeWidth="4" strokeDasharray="12 4 4 4" />
                    {a.heads.map(([x, y, r]) => (
                        <path key={r} d="M0 0L-16 -7L-11 0L-16 7Z" fill="#c00000" transform={`translate(${x} ${y}) rotate(${r})`} />
                    ))}
                </g>
            ))}
        </svg>
        <div className="absolute left-[804px] top-[18px]">Cutoff date is update date for project</div>
        <div className="absolute left-[19px] top-[168px]">Completed effort</div>
        <div className="absolute left-[238px] top-[753px]">Delayed tasks related to the cutoff date, work performed and open effort</div>
    </div>
);

const App = () => (
    <div className="relative min-h-screen flex flex-col bg-white border-l border-t border-r-2 border-b border-[#0a63c9] border-b-[#c8ccd4] font-['Liberation_Sans',Arial,sans-serif]">
        <div className="font-['Open_Sans','Noto_Sans',sans-serif] text-[11px]">
            <TitleBar />
            <div className="ml-0.5 mr-[3px] -mt-px flex h-px">
                <div className="w-[60px] bg-[#d0d0d0]" />
                <div className="w-[58px]" />
                <div className="flex-1 bg-[#d0d0d0]" />
            </div>
            <div className="text-[#3b3b3b]"><Ribbon /></div>
        </div>

        <main className="flex flex-col pl-0.5 pr-[3px]">
            <div className="flex">
                <ActivityGrid />
                <div className="w-[3px] shrink-0 bg-[#b4b4b4]" />
                <Gantt />
                <div className="w-4 shrink-0 bg-[#ededed] flex flex-col">
                    <ScrollButton label="Scroll up" d="M0 7l4.500-5L9 7z" />
                    <div className="h-[42px] bg-white border border-[#d6d6d6]" />
                    <div className="flex-1" />
                    <ScrollButton label="Scroll down" d="M0 2l4.500 5L9 2z" />
                </div>
            </div>
            <div className="flex bg-[#ededed] pr-4">
                <ScrollButton label="Scroll left" d="M7 0L2 4.500L7 9z" />
                <div className="w-[15px] bg-white border border-[#d6d6d6]" />
                <div className="flex-1" />
                <ScrollButton label="Scroll right" d="M2 0l5 4.500L2 9z" />
            </div>
            <div className="h-[3px] bg-[#b4b4b4]" />
        </main>

        <Portfolio />
        <div className="font-['Open_Sans','Noto_Sans',sans-serif] text-[11px]"><StatusBar /></div>
        <Callouts />
    </div>
);

export default App;
